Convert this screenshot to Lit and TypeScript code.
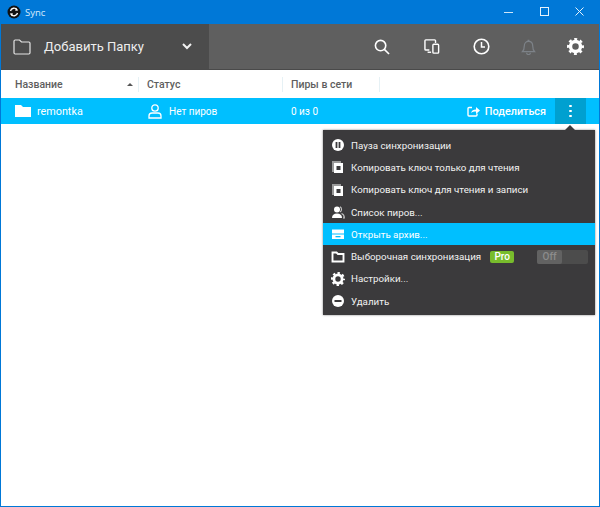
import { LitElement, html, css, svg } from 'lit';
import { customElement } from 'lit/decorators.js';

const gear = (size: number) => html`
  <svg width=${size} height=${size} viewBox="0 0 14 14">
    <circle cx="7" cy="7" r="4.100" fill="none" stroke="#fff" stroke-width="2.800"/>
    <circle cx="7" cy="7" r="6" fill="none" stroke="#fff" stroke-width="2" stroke-dasharray="2.400 2.312" stroke-dashoffset="1.200"/>
  </svg>
`;

const menuIcons = {
  pause: svg`<circle cx="7" cy="7" r="6" fill="#fff"/><rect x="4.600" y="4" width="1.800" height="6" fill="#3b3a3c"/><rect x="7.600" y="4" width="1.800" height="6" fill="#3b3a3c"/>`,
  copy: svg`<path d="M1 1h9v2H3v9H1z" fill="#9a9a9a"/><rect x="3" y="3" width="9" height="10" fill="#fff"/><rect x="5.500" y="6" width="4" height="4" fill="#3b3a3c"/>`,
  peers: svg`<circle cx="6" cy="4.500" r="3" fill="#fff"/><path d="M1 13c0-3 1.800-4.500 5-4.500s5 1.500 5 4.500z" fill="#fff"/><path d="M9 1.800a3 3 0 0 1 0 5.200M10.500 8.500c1.700.5 2.800 1.800 2.800 4.500H12" stroke="#c8c8c8" stroke-width="1.200" fill="none"/>`,
  archive: svg`<path d="M1 2.500h12v4H1zM1 7.500h12v4.500H1z" fill="#fff"/><rect x="4.500" y="9" width="5" height="1.300" fill="#00bfff"/>`,
  folder: svg`<path d="M1.500 2.500h4l1.500 1.500h5.500v7.500h-11z" fill="none" stroke="#fff" stroke-width="1.900"/>`,
  remove: svg`<circle cx="7" cy="7" r="6" fill="#fff"/><rect x="3.500" y="6" width="7" height="2" fill="#3b3a3c"/>`,
};

const menuRows = [
  { icon: menuIcons.pause, label: 'Пауза синхронизации' },
  { icon: menuIcons.copy, label: 'Копировать ключ только для чтения' },
  { icon: menuIcons.copy, label: 'Копировать ключ для чтения и записи' },
  { icon: menuIcons.peers, label: 'Список пиров...' },
  { icon: menuIcons.archive, label: 'Открыть архив...', active: true },
  { icon: menuIcons.folder, label: 'Выборочная синхронизация', pro: true },
  { label: 'Настройки...', gear: true },
  { icon: menuIcons.remove, label: 'Удалить' },
];

@customElement('app-root')
export class AppRoot extends LitElement {
  static styles = css`
    :host {
      display: block;
      position: relative;
      width: 600px;
      height: 507px;
      box-sizing: border-box;
      background: #fff;
      border: 1px solid #0078d7;
      border-top: 0;
      font-family: Roboto, "Liberation Sans", sans-serif;
      overflow: hidden;
    }
    svg { display: block; flex: none; }

    .titlebar {
      height: 24px;
      background: #0078d7;
      display: flex;
      align-items: center;
      color: #fff;
      padding-left: 6px;
      padding-right: 1px;
    }
    .titlebar .name { margin-left: 4px; flex: 1; font-family: "Open Sans", sans-serif; font-size: 9.500px; color: #d8ecfb; }
    .winbtn { width: 35.500px; height: 24px; display: flex; align-items: center; justify-content: center; }

    .toolbar {
      height: 46px;
      box-sizing: border-box;
      background: #5f5f5f;
      border-bottom: 1px solid #4a4a4a;
      display: flex;
    }
    .add {
      width: 208px;
      background: #4c4c4c;
      display: flex;
      align-items: center;
      color: #eee;
      font-size: 13px;
      padding-left: 12px;
      box-sizing: border-box;
    }
    .add .label { margin-left: 13px; flex: 1; }
    .add .chev { margin-right: 17px; }
    .tools { flex: 1; display: flex; align-items: center; justify-content: flex-end; }
    .tool { width: 50px; display: flex; justify-content: center; }
    .tool.narrow { width: 47px; }
    .tool.mid { width: 48px; }

    .head {
      height: 28px;
      box-sizing: border-box;
      display: flex;
      align-items: center;
      font-size: 10.500px;
      font-weight: 500;
      color: #5e5e5e;
    }
    .col { height: 15px; display: flex; align-items: center; box-sizing: border-box; border-right: 1px solid #e6f1f5; }
    .c1 { width: 138px; padding-left: 14px; justify-content: space-between; padding-right: 5px; }
    .c2 { width: 144px; padding-left: 8px; }
    .c3 { width: 97px; padding-left: 8px; }
    .sort { width: 0; height: 0; border: 3px solid transparent; border-bottom: 3px solid #555; border-top: 0; }

    .row {
      height: 26px;
      background: #00bfff;
      display: flex;
      align-items: center;
      color: #fff;
      font-size: 10px;
    }
    .row .name { width: 138px; padding-left: 14px; box-sizing: border-box; display: flex; align-items: center; gap: 6px; font-size: 10.800px; }
    .row .status { width: 144px; padding-left: 9px; box-sizing: border-box; display: flex; align-items: center; gap: 7px; }
    .row .peers { flex: 1; padding-left: 8px; }
    .share { display: flex; align-items: center; gap: 5px; font-weight: 500; font-size: 10.800px; margin-right: 9px; }
    .more { width: 31px; height: 26px; background: #00a0d0; display: flex; flex-direction: column; align-items: center; justify-content: center; gap: 2.500px; margin-right: 13px; }
    .more i { width: 2.500px; height: 2.500px; background: #fff; border-radius: 50%; }

    .menu {
      position: absolute;
      left: 322px;
      top: 130px;
      width: 272px;
      height: 185px;
      box-sizing: border-box;
      padding: 4px 0;
      background: #3b3a3c;
      box-shadow: 0 0 2px rgba(0,0,0,.5);
      color: #f2f2f2;
      font-size: 9.750px;
    }
    .menu::before {
      content: "";
      position: absolute;
      right: 20px;
      top: -5px;
      border: 5px solid transparent;
      border-top: 0;
      border-bottom-color: #3b3a3c;
    }
    .item {
      height: 22.300px;
      display: flex;
      align-items: center;
      padding-left: 8px;
      gap: 6px;
    }
    .item.active { background: #00bfff; color: #fff; }
    .pro {
      background: #78bc2c;
      color: #fff;
      font-size: 10px;
      font-weight: 500;
      border-radius: 2px;
      width: 24px;
      height: 12px;
      line-height: 12px;
      text-align: center;
      margin-left: 3px;
    }
    .toggle {
      position: absolute;
      left: 214px;
      width: 51px;
      height: 14px;
      background: #4c4c4c;
      border-radius: 2px;
    }
    .toggle span {
      display: block;
      width: 25px;
      height: 14px;
      line-height: 14px;
      background: #626262;
      border-radius: 2px;
      color: #8c8c8c;
      font-size: 10px;
      font-weight: 500;
      text-align: center;
    }
  `;

  render() {
    return html`
      <div class="titlebar">
        <svg width="14" height="14" viewBox="0 0 14 14">
          <circle cx="7" cy="7" r="6.500" fill="#111"/>
          <path d="M3.500 6a3.600 3.600 0 0 1 6.500-1.200M10.500 8a3.600 3.600 0 0 1-6.500 1.200" fill="none" stroke="#fff" stroke-width="1.300"/>
          <path d="M9 2.800l2.200 2.600-3 .3zM5 11.200L2.800 8.600l3-.3z" fill="#fff"/>
        </svg>
        <span class="name">Sync</span>
        <div class="winbtn">
          <svg width="10" height="10" viewBox="0 0 10 10"><path d="M0 5.500h9" stroke="#cfe6f8"/></svg>
        </div>
        <div class="winbtn">
          <svg width="10" height="10" viewBox="0 0 10 10"><rect x=".5" y=".5" width="8" height="8" fill="none" stroke="#e6f2fb"/></svg>
        </div>
        <div class="winbtn">
          <svg width="10" height="10" viewBox="0 0 10 10"><path d="M.5.500l8 8M8.500.5l-8 8" stroke="#e6f2fb"/></svg>
        </div>
      </div>

      <div class="toolbar">
        <div class="add">
          <svg width="18" height="16" viewBox="0 0 18 16"><path d="M1 2.200C1 1.500 1.500 1 2.200 1h4.300l2 2h7.300c.7 0 1.200.5 1.200 1.200v9.600c0 .7-.5 1.200-1.200 1.200H2.200C1.500 15 1 14.500 1 13.800z" fill="none" stroke="#e4e4e4" stroke-width="1.200"/></svg>
          <span class="label">Добавить Папку</span>
          <svg class="chev" width="10" height="7" viewBox="0 0 10 7"><path d="M1 1l4 4 4-4" fill="none" stroke="#f2f2f2" stroke-width="2"/></svg>
        </div>
        <div class="tools">
          <div class="tool">
            <svg width="16" height="16" viewBox="0 0 17 17"><circle cx="7" cy="7" r="5.500" fill="none" stroke="#fff" stroke-width="1.700"/><path d="M11 11l5 5" stroke="#fff" stroke-width="1.700"/></svg>
          </div>
          <div class="tool">
            <svg width="16" height="15" viewBox="0 0 18 17"><path d="M6 12.500H2c-.6 0-1-.4-1-1V2c0-.6.4-1 1-1h10c.6 0 1 .4 1 1v2.500" fill="none" stroke="#fff" stroke-width="1.600"/><rect x="10" y="6" width="6.500" height="10" rx="1" fill="none" stroke="#fff" stroke-width="1.600"/><path d="M4 15h4" stroke="#fff" stroke-width="1.600"/></svg>
          </div>
          <div class="tool mid">
            <svg width="17" height="17" viewBox="0 0 17 17"><circle cx="8.500" cy="8.500" r="7.300" fill="none" stroke="#fff" stroke-width="1.600"/><path d="M8.500 4v5h3.500" fill="none" stroke="#fff" stroke-width="1.500"/></svg>
          </div>
          <div class="tool narrow">
            <svg width="15" height="16" viewBox="0 0 16 17"><path d="M1.500 13.500c1.500-1.500 2-3 2-6 0-3 2-5 4.500-5s4.500 2 4.500 5c0 3 .5 4.500 2 6z" fill="none" stroke="#7d8288" stroke-width="1.300"/><path d="M6 14.500a2 2 0 0 0 4 0M7 1.500h2" fill="none" stroke="#7d8288" stroke-width="1.300"/></svg>
          </div>
          <div class="tool narrow">${gear(17)}</div>
        </div>
      </div>

      <div class="head">
        <div class="col c1"><span>Название</span><i class="sort"></i></div>
        <div class="col c2">Статус</div>
        <div class="col c3">Пиры в сети</div>
      </div>

      <div class="row">
        <div class="name">
          <svg width="16" height="14" viewBox="0 0 16 14"><path d="M0 1h6l2 2h8v10H0z" fill="#fff"/></svg>
          remontka
        </div>
        <div class="status">
          <svg width="14" height="15" viewBox="0 0 14 15"><circle cx="7" cy="4" r="3.200" fill="none" stroke="#fff" stroke-width="1.300"/><path d="M1 14v-2c0-2 1.500-3 3-3h6c1.500 0 3 1 3 3v2z" fill="none" stroke="#fff" stroke-width="1.300"/></svg>
          Нет пиров
        </div>
        <div class="peers">0 из 0</div>
        <div class="share">
          <svg width="13" height="11" viewBox="0 0 13 11"><path d="M5 1.500H2c-.6 0-1 .4-1 1V9c0 .6.4 1 1 1h7c.6 0 1-.4 1-1V7.500" fill="none" stroke="#fff" stroke-width="1.400"/><path d="M4 7c.5-2.500 2.500-3.500 5-3.500V1l4 3.500L9 8V5.500c-2 0-3.500.2-5 1.500z" fill="#fff"/></svg>
          Поделиться
        </div>
        <div class="more"><i></i><i></i><i></i></div>
      </div>

      <div class="menu">
        ${menuRows.map(
          (r) => html`
            <div class="item ${r.active ? 'active' : ''}">
              ${r.gear ? gear(14) : html`<svg width="14" height="14" viewBox="0 0 14 14">${r.icon}</svg>`}
              <span>${r.label}</span>
              ${r.pro
                ? html`<span class="pro">Pro</span><div class="toggle"><span>Off</span></div>`
                : ''}
            </div>
          `,
        )}
      </div>
    `;
  }
}
